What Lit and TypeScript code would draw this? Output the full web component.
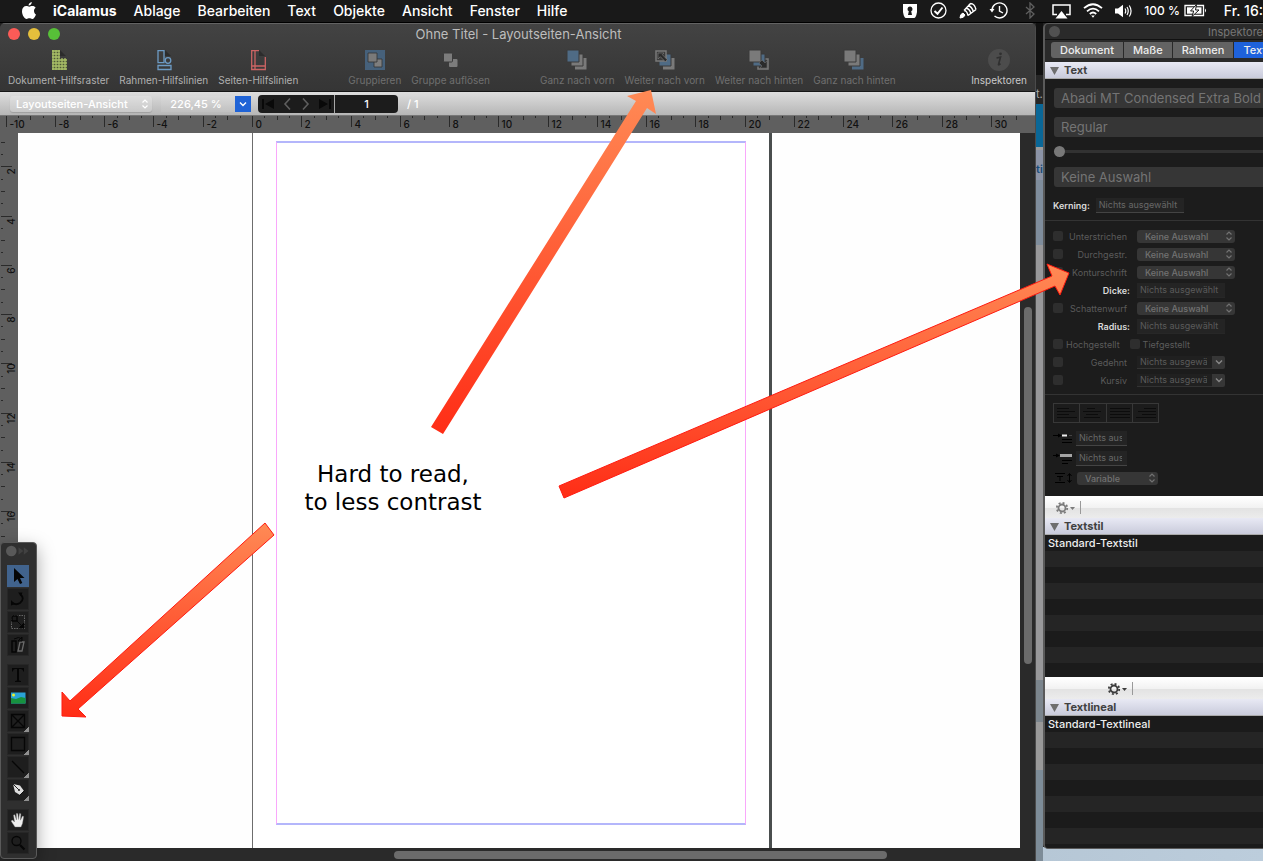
import { LitElement, html, css, svg, nothing } from "lit";
import { customElement, property } from "lit/decorators.js";
import { classMap } from "lit/directives/class-map.js";

const CM = 24.63;

const chevrons = html`<svg class="chev" viewBox="0 0 8 12" width="8" height="12" aria-hidden="true">
  <path d="M1.5 4.5 4 2l2.5 2.5M1.5 7.5 4 10l2.5-2.5" fill="none" stroke="currentColor" stroke-width="1.2" />
</svg>`;

const down = html`<svg class="chev" viewBox="0 0 10 10" width="10" height="10" aria-hidden="true">
  <path d="M2 3.5 5 6.5 8 3.5" fill="none" stroke="currentColor" stroke-width="1.4" />
</svg>`;

const sheet = svg`<path d="M12 1l6 6h-6z" fill="#2c2c2c" />`;

const toolbarIcons: Record<string, unknown> = {
  grid: svg`${sheet}<path d="M4 1h7v9h8v11H4z" fill="#4f5a37"/>
    <path d="M5 1v20M8 1v20M11 1v20M14 9v12M17 9v12M4 2h8M4 5h8M4 8h8M4 11h15M4 14h15M4 17h15M4 20h15" stroke="#a9bf68" stroke-width="1.3" fill="none"/>`,
  frames: svg`${sheet}<g fill="none" stroke="#6d9bc4" stroke-width="1.3"><path d="M5 1.7h6v12H5zM5 16.5h13v4H5z"/><circle cx="15" cy="11.5" r="2.8"/></g>`,
  pages: svg`${sheet}<path d="M12 1.7H4.7v18.8h13.6V8M8 2v18M4.7 17h13.6" fill="none" stroke="#cc6464" stroke-width="1.3"/>`,
  group: svg`<path d="M1 1h20v20H1z" fill="#46617b"/><path d="M10 10h8v8h-8z" fill="#7e7e7e" stroke="#333" stroke-width=".8"/><path d="M4 4h9v9H4z" fill="#7a7a7a" stroke="#333" stroke-width=".8"/>`,
  ungroup: svg`<rect x="9" y="10" width="8.500" height="8" rx="1" fill="#7c7c7c"/><rect x="3.500" y="4" width="9" height="9" rx="1" fill="#7c7c7c" stroke="#3b3b3b"/>`,
  front: svg`<path d="M9 9h11.500v11.500H9z" fill="#7a7a7a"/><path d="M5 5h12v12H5z" fill="#7a7a7a" stroke="#3b3b3b"/><path d="M1 1h12v12H1z" fill="#4f6b85" stroke="#3b3b3b"/>`,
  forward: svg`<path d="M9 9h11.500v11.500H9z" fill="#7a7a7a"/><path d="M5 5h12v12H5z" fill="#4f6b85" stroke="#3b3b3b"/><path d="M2 2h10v10H2z" fill="#3b3b3b" stroke="#7a7a7a" stroke-width="1.500"/><path d="M4 4h6L8.300 5.700l5 5-2 2-5-5L4 10z" fill="#2b2b2b" stroke="#848484" stroke-width=".6"/>`,
  backward: svg`<path d="M10 10h10v10H10z" fill="#3b3b3b" stroke="#7a7a7a" stroke-width="1.500"/><path d="M5 5h12v12H5z" fill="#4f6b85" stroke="#3b3b3b"/><path d="M1 1h12v12H1z" fill="#7a7a7a" stroke="#3b3b3b"/><path d="M19 19h-7l2-2-3-3 3-3 3 3 2-2z" fill="#2b2b2b" stroke="#777" stroke-width=".5"/>`,
  back: svg`<path d="M9 9h11.500v11.500H9z" fill="#4f6b85"/><path d="M5 5h12v12H5z" fill="#7a7a7a" stroke="#3b3b3b"/><path d="M1 1h12v12H1z" fill="#7a7a7a" stroke="#3b3b3b"/>`,
  info: svg`<circle cx="11" cy="11" r="11" fill="#4c4c4c"/><path d="M8.500 9l4-.8-2 7.300q0 .9 2-.9" fill="none" stroke="#303030" stroke-width="1.700"/><circle cx="12.500" cy="4.800" r="1.400" fill="#303030"/>`,
};

const toolGroups = [
  [["grid", "Dokument-Hilfsraster"], ["frames", "Rahmen-Hilfslinien"], ["pages", "Seiten-Hilfslinien"]],
  [["group", "Gruppieren"], ["ungroup", "Gruppe auflösen"]],
  [["front", "Ganz nach vorn"], ["forward", "Weiter nach vorn"], ["backward", "Weiter nach hinten"], ["back", "Ganz nach hinten"]],
  [["info", "Inspektoren"]],
];

@customElement("menu-bar")
export class MenuBar extends LitElement {
  static styles = css`
    :host { display: flex; align-items: center; justify-content: space-between; height: 23px; background: #191919; color: #fff; font-size: 14px; font-weight: 500; line-height: 21px; overflow: hidden; border-bottom: 1px solid #000; box-sizing: border-box; }
    nav, .status { display: flex; align-items: center; white-space: nowrap; height: 21px; align-self: flex-start; }
    nav { padding-left: 22px; gap: 17px; }
    svg { display: block; flex: none; }
    button { all: unset; }
    .app { font-weight: 700; }
    .status { gap: 12px; }
    .power { display: flex; align-items: center; gap: 4px; margin-right: 5px; font-size: 12px; }
    .off { opacity: 0.3; }
  `;
  render() {
    const items = ["Ablage", "Bearbeiten", "Text", "Objekte", "Ansicht", "Fenster", "Hilfe"];
    return html`
      <nav aria-label="Menü">
        <svg width="14" height="17" viewBox="0 0 14 17" fill="#fff"><path d="M9.800 0c.1 1.900-1.400 3.600-3.200 3.600C6.400 1.900 8.100.200 9.800 0zM12 8.700c0-1.500.8-2.400 1.700-3C12.800 4.400 11.400 4 10.300 4 9 4 8.100 4.700 7.300 4.700 6.500 4.700 5.500 4 4.300 4 1.900 4 0 6 0 9.200 0 13 2.600 17 4.600 17c1 0 1.600-.7 2.800-.7s1.700.7 2.800.7c1.600 0 3.100-2.700 3.800-4.600C12.800 11.900 12 10.600 12 8.700z"/></svg>
        <button class="app">iCalamus</button>
        ${items.map((t) => html`<button>${t}</button>`)}
      </nav>
      <div class="status">
        <svg width="16" height="16" viewBox="0 0 16 16"><path d="M1 1h14v8q-1 6-3 6H4q-2 0-3-6z" fill="#fff"/><path d="M8 3.500a2.500 2.500 0 0 1 1.200 4.700L10 12H6l.8-3.800A2.500 2.500 0 0 1 8 3.500z" fill="#191919"/></svg>
        <svg width="17" height="17" viewBox="0 0 17 17" fill="none" stroke="#fff"><circle cx="8.500" cy="8.500" r="7.500" stroke-width="1.300"/><path d="M4.500 9l3 2.800 5-6.300" stroke-width="2"/></svg>
        <svg width="18" height="17" viewBox="0 0 18 17" fill="none" stroke="#fff"><path d="M1 16q0-4 3-5l2 2q-1 3-5 3" fill="#fff"/><path d="M5 8.500q3 0 4 5M7 6q4 1 5 6M9 3.500q4 1 5.500 6.500M11.500 1.500q4 0 5.500 6M5 8.500l6.500-7M9 13.500l8-6" stroke-width="1.400"/></svg>
        <svg width="19" height="17" viewBox="0 0 19 17" fill="none" stroke="#fff"><path d="M3 8.500A7.500 7.500 0 1 1 5.500 14M10.500 4v5l3.500 2" stroke-width="1.400"/><path d="M.5 7h5L3 10.500z" fill="#fff" stroke="none"/></svg>
        <svg class="off" width="20" height="17" viewBox="0 0 20 17" fill="none" stroke="#fff" stroke-width="1.300"><path d="M6 5l8 7-4 4V1l4 4-8 7"/></svg>
        <svg width="19" height="16" viewBox="0 0 19 16"><path d="M5 11.500H1V2h17v9.500h-4" fill="none" stroke="#fff" stroke-width="1.500"/><path d="M9.500 8l6 7.500h-12z" fill="#fff"/></svg>
        <svg width="20" height="15" viewBox="0 0 20 15" fill="none" stroke="#fff" stroke-width="1.800"><path d="M1 5.200q9-8 18 0M4 8.300q6-5.300 12 0M6.800 11q3.200-3 6.400 0"/><path d="M8.200 12.500h3.600L10 14.800z" fill="#fff" stroke="none"/></svg>
        <svg width="17" height="14" viewBox="0 0 17 14"><path d="M0 4.500h3L8 .8v12.400L3 9.500H0z" fill="#fff"/><path d="M10 4.500q1.500 2.500 0 5M12 3q2.500 4 0 8M14.300 1.500q3.500 5.500 0 11" fill="none" stroke="#fff" stroke-width="1.200"/></svg>
        <span class="power">100 %
          <svg width="23" height="13" viewBox="0 0 23 13"><path d="M1 1.500h18.500v10H1z" fill="none" stroke="#fff" stroke-width="1.300"/><path d="M3 3.300h14.500v6.400H3z" fill="#fff"/><path d="M21 4.500q2 2 0 4z" fill="#fff"/><path d="M12.500.5l-6 6.500h3.200L8 12.500 15 6h-3.500z" fill="#fff" stroke="#191919"/></svg>
        </span>
        <span>Fr. 16:</span>
      </div>`;
  }
}

@customElement("ruler-strip")
export class RulerStrip extends LitElement {
  @property({ type: Boolean, reflect: true }) vertical = false;
  @property({ type: Number }) origin = 0;
  @property({ type: Number }) from = 0;
  @property({ type: Number }) to = 0;
  static styles = css`
    :host { display: block; background: #5f5f5f; overflow: hidden; height: 18px; box-sizing: border-box; border-top: 1px solid #777; }
    :host([vertical]) { height: auto; width: 18px; min-height: 0; border-top: 0; }
    svg { display: block; width: 100%; height: 100%; overflow: hidden; }
    text { font: 500 10px Inter, sans-serif; fill: #111; }
    path { stroke: #2a2a2a; fill: none; }
  `;
  render() {
    const marks = [];
    for (let h = this.from * 2; h <= this.to * 2; h++) {
      const p = Math.round(this.origin + (h / 2) * CM) + 0.5;
      const len = h % 4 === 0 ? 11 : h % 2 === 0 ? 4 : 2;
      const label = h % 4 === 0 ? String(h / 2) : "";
      marks.push(
        this.vertical
          ? svg`<path d="M1 ${p}h${len}"/>${label ? svg`<text transform="translate(15 ${p + 5}) rotate(-90)" text-anchor="middle">${label}</text>` : nothing}`
          : svg`<path d="M${p} 0v${len}"/>${label ? svg`<text x=${p + 3} y="12">${label}</text>` : nothing}`
      );
    }
    return html`<svg aria-hidden="true">${marks}</svg>`;
  }
}

const ink = "#060606";
const tools: [string, unknown, boolean?][][] = [
  [
    ["Auswahl", svg`<path d="M7 3v14l3.500-3 2.500 5 2.300-1-2.300-5h4.500z" fill="#050505"/>`],
    ["Drehen", svg`<path d="M13 6q5.500 4.500 0 9-4 2.500-7.500 0" fill="none" stroke=${ink} stroke-width="1.800"/><path d="M11 4.500h4.500L14 8zM4 12v5.500l4-1.500z" fill=${ink}/>`],
    ["Skalieren", svg`<path d="M4.500 4.500h13v13h-13z" fill="none" stroke="#666" stroke-dasharray="1.500 1"/><path d="M5 5h5v5H5z" fill="#1d1d1d" stroke=${ink} stroke-width="1.500"/><path d="M10 10l5 5M17 17v-5l-5 5z" fill=${ink} stroke=${ink}/>`],
    ["Neigen", svg`<path d="M5 7h4v11H5z" fill="none" stroke=${ink} stroke-width="1.500"/><path d="M13 8h4l-2 9h-4z" fill="none" stroke="#6a6a6a" stroke-width="1.300"/><path d="M7 5q5-3 8 0M15 3v4h-4z" fill="none" stroke=${ink}/>`],
  ],
  [
    ["Text", svg`<path d="M5 4h12v3.500h-.8Q16 5.200 14 5h-2v11q0 1 2 1v1H8v-1q2 0 2-1V5H8Q6 5.200 5.800 7.500H5z" fill=${ink}/>`],
    ["Bild", svg`<path d="M4 5.500h14.500v11H4z" fill="#2aa3d6"/><path d="M4 11l5 1 5-2 4.500 1v5.500H4z" fill="#17923f"/><circle cx="6.500" cy="8" r="1.500" fill="#e9f02f"/>`],
    ["Rahmen", svg`<path d="M4.500 4.500h13v13h-13zl13 13m0-13l-13 13" fill="none" stroke=${ink} stroke-width="1.300"/>`, true],
    ["Rechteck", svg`<path d="M4.500 4.500h13v13h-13z" fill="none" stroke=${ink} stroke-width="1.300"/>`, true],
    ["Linie", svg`<path d="M5 5l12 12" fill="none" stroke=${ink} stroke-width="1.300"/>`, true],
    ["Feder", svg`<path d="M6 5l7 1.500 4 5.500-4 4-5-3z" fill="#ddd"/><path d="M12 17l6-6" stroke="#111"/><path d="M6 5l6 6" stroke="#222"/><circle cx="12" cy="11" r="1" fill="#222"/>`, true],
  ],
  [
    ["Hand", svg`<path d="M8 18l-4-6 1.500-1 2 2L6.500 6l1.300-.3L9.500 11 9.300 4.500h1.500l.7 6 1-6 1.400.2-.5 6.500L15.500 7l1.200.5-1.200 7L14 18z" fill="#eee" stroke="#777" stroke-width=".4"/>`],
    ["Lupe", svg`<circle cx="9.500" cy="9" r="4.500" fill="none" stroke=${ink} stroke-width="1.300"/><path d="M13 13l4.500 4.500" stroke=${ink} stroke-width="2.200"/>`],
  ],
];

@customElement("tool-palette")
export class ToolPalette extends LitElement {
  static styles = css`
    :host { display: flex; flex-direction: column; box-sizing: border-box; width: 37px; padding: 2px 6px 4px; gap: 8px; background: #2f2f2f; border: 1px solid #5a5a5a; border-radius: 4px; box-shadow: 0 6px 18px rgba(0, 0, 0, 0.35); }
    .bar { display: flex; align-items: center; height: 12px; margin: 0 -1px; }
    .group { display: flex; flex-direction: column; gap: 1px; }
    button { all: unset; display: block; width: 22px; height: 22px; background: #1e1e1e; box-shadow: inset 0 0 0 1px #272727; }
    button.on { background: #41638d; box-shadow: none; }
    svg { display: block; }
  `;
  render() {
    return html`<div class="bar"><svg width="26" height="12" viewBox="0 0 26 12"><circle cx="5.500" cy="6" r="5.500" fill="#595959"/><path d="M13 2l5 4-5 4zM18.500 2l5 4-5 4z" fill="#414141"/></svg></div>
      ${tools.map((g) => html`<div class="group">${g.map(([name, icon, more]) => html`
        <button class=${classMap({ on: name === "Auswahl" })} aria-label=${name}>
          <svg width="22" height="22" viewBox="0 0 22 22">${icon}${more ? svg`<path d="M22 17v5h-5z" fill="#8f8f8f" stroke="#8f8f8f"/>` : nothing}</svg>
        </button>`)}</div>`)}`;
  }
}

@customElement("layout-window")
export class LayoutWindow extends LitElement {
  static styles = css`
    :host { display: flex; flex-direction: column; min-width: 0; box-sizing: border-box; border-right: 1px solid #4b4b4b; border-radius: 5px 5px 0 0; overflow: hidden; background: #2a2a2a; }
    header { background: linear-gradient(#434343, #353535); border-top: 1px solid #636363; border-bottom: 1px solid #161616; height: 67px; box-sizing: content-box; }
    .title { display: grid; grid-template-columns: 1fr auto 1fr; align-items: center; height: 20px; padding-left: 2px; color: #bdbdbd; font-size: 13px; }
    .lights { display: flex; gap: 8px; padding-left: 6px; }
    .light { width: 12px; height: 12px; border-radius: 50%; background: #fc5b57; }
    .light.min { background: #e5bf3c; }
    .light.max { background: #57c038; }
    .tools { display: flex; gap: 50px; padding: 5px 8px 0 8px; color: #6f6f6f; }
    .set { display: flex; gap: 10px; }
    .set:last-child { margin-left: auto; color: #c9c9c9; }
    .set:first-child { color: #b0b0b0; }
    .tool { all: unset; display: flex; flex-direction: column; align-items: center; gap: 1px; font-size: 10px; line-height: 16px; white-space: nowrap; }
    svg { display: block; }
    .controls { display: flex; align-items: center; flex: none; height: 23px; padding-left: 10px; background: linear-gradient(#dedede, #b6b6b6); color: #fff; font-size: 11px; font-weight: 500; }
    .pick { display: grid; align-items: center; width: 142px; height: 16px; border-radius: 3px; background: rgba(255, 255, 255, 0.2); box-shadow: 0 1px 1px rgba(0, 0, 0, 0.15); }
    .pick > * { grid-area: 1 / 1; }
    .pick .chev { justify-self: end; margin-right: 3px; }
    select, input { all: unset; box-sizing: border-box; min-width: 0; }
    select { padding-left: 6px; height: 16px; line-height: 16px; }
    .zoom { display: flex; margin-left: 9px; height: 16px; }
    .zoom input { width: 74px; padding-right: 4px; text-align: center; background: rgba(255, 255, 255, 0.08); }
    .zoom button { all: unset; display: grid; place-items: center; width: 16px; background: #1f63d6; }
    .pager { display: flex; align-items: center; margin: 0 9px 0 7px; width: 140px; height: 18px; border-radius: 4px; background: #1c1c1c; }
    .pager button { all: unset; flex: 1; display: grid; place-items: center; color: #5e5e5e; }
    .pager button.end { color: #090909; }
    .pager input { width: 64px; height: 18px; border-left: 1px solid #a8a8a8; text-align: center; }
    .work { flex: 1; min-height: 0; display: grid; grid-template-columns: 18px minmax(0, 1fr) 15px; grid-template-rows: minmax(0, 1fr) 13px; }
    .canvas { position: relative; background: #fefefe; overflow: hidden; }
    .page { position: absolute; left: 234px; top: 0; bottom: 0; width: 520px; box-sizing: border-box; border-left: 1px solid #6d6d6d; border-right: 3px solid #4a4e4e; background: #fff; }
    .margins { position: absolute; left: 23px; top: 8px; width: 470px; height: 684px; box-sizing: border-box; border: 1px solid #f9a8fb; border-top: 2px solid #b4b6fb; border-bottom: 2px solid #b4b6fb; }
    .note { position: absolute; left: 280px; top: 327px; width: 190px; margin: 0; text-align: center; color: #000; font: 400 23px/28px "DejaVu Sans", sans-serif; white-space: nowrap; }
    .vrail { display: flex; justify-content: flex-end; padding: 174px 3px 0 0; }
    .vrail i { width: 8px; height: 357px; border-radius: 4px; background: #6b6b6b; }
    .hrail { grid-column: 1 / -1; display: flex; align-items: center; padding-left: 394px; }
    .hrail i { height: 8px; width: 493px; border-radius: 4px; background: #6b6b6b; }
    ruler-strip { flex: none; }
  `;
  render() {
    return html`
      <header>
        <div class="title"><span class="lights"><span class="light"></span><span class="light min"></span><span class="light max"></span></span><span>Ohne Titel - Layoutseiten-Ansicht</span></div>
        <div class="tools">${toolGroups.map((g) => html`<div class="set">${g.map(([icon, label]) => html`<button class="tool"><svg width="22" height="22" viewBox="0 0 22 22">${toolbarIcons[icon]}</svg>${label}</button>`)}</div>`)}</div>
      </header>
      <div class="controls">
        <div class="pick"><select aria-label="Ansicht"><option>Layoutseiten-Ansicht</option></select>${chevrons}</div>
        <div class="zoom"><input aria-label="Zoom" value="226,45 %" /><button aria-label="Zoomstufen">${down}</button></div>
        <div class="pager">
          <button class="end" aria-label="Erste Seite"><svg width="14" height="12" viewBox="0 0 14 12" fill="currentColor"><path d="M1 1h2v10H1zM13 1v10L4 6z"/></svg></button>
          <button aria-label="Zurück"><svg width="10" height="14" viewBox="0 0 10 14" fill="none" stroke="currentColor" stroke-width="1.600"><path d="M8 1.500 3 7l5 5.500"/></svg></button>
          <button aria-label="Weiter"><svg width="10" height="14" viewBox="0 0 10 14" fill="none" stroke="currentColor" stroke-width="1.600"><path d="M2 1.500 7 7l-5 5.500"/></svg></button>
          <button class="end" aria-label="Letzte Seite"><svg width="14" height="12" viewBox="0 0 14 12" fill="currentColor"><path d="M11 1h2v10h-2zM1 1v10l9-5z"/></svg></button>
          <input aria-label="Seite" value="1" />
        </div>
        <span>/ 1</span>
      </div>
      <ruler-strip .origin=${252} .from=${-10} .to=${31}></ruler-strip>
      <div class="work">
        <ruler-strip vertical .origin=${-16} .from=${1} .to=${29}></ruler-strip>
        <div class="canvas">
          <div class="page"><div class="margins"></div></div>
          <p class="note">Hard to read,<br />to less contrast</p>
        </div>
        <div class="vrail"><i></i></div>
        <div class="hrail"><i></i></div>
      </div>`;
  }
}

const gear = html`<svg width="20" height="14" viewBox="0 0 20 14" aria-hidden="true"><circle cx="6" cy="7" r="3.500" fill="none" stroke="currentColor" stroke-width="1.800"/><circle cx="6" cy="7" r="5.200" fill="none" stroke="currentColor" stroke-width="1.800" stroke-dasharray="2 2.080"/><path d="M14 6h5l-2.500 3z" fill="currentColor"/></svg>`;

@customElement("inspector-panel")
export class InspectorPanel extends LitElement {
  static styles = css`
    :host { display: flex; flex-direction: column; box-sizing: border-box; overflow: hidden; white-space: nowrap; border: 1px solid #5a5a5a; border-left-width: 2px; border-right: 0; border-radius: 5px 0 0 5px; background: #2a2a2a; color: #5b5b5b; font-size: 9px; }
    svg { display: block; }
    .title { display: flex; align-items: center; justify-content: space-between; height: 15px; padding-left: 4px; color: #777; font-size: 11px; border-bottom: 1px solid #111; }
    .dot { width: 11px; height: 11px; border-radius: 50%; background: #515151; }
    .tabs { display: flex; gap: 1px; margin: 2px 0 4px 6px; height: 16px; flex: none; font-size: 11px; font-weight: 500; line-height: 16px; }
    .tabs button { all: unset; padding: 0 9px; background: #636363; color: #eee; }
    .tabs button:first-child { border-radius: 3px 0 0 3px; }
    .tabs button.on { flex: 1 0 auto; background: #1e62dc; }
    h2 { display: flex; flex: none; align-items: center; gap: 5px; margin: 0; height: 17px; padding: 1px 0 0 5px; box-sizing: border-box; background: linear-gradient(#e8e9f4, #c9cbdb); border-bottom: 1px solid #aaa; color: #414141; font-size: 11px; font-weight: 700; line-height: 15px; }
    select, input { all: unset; box-sizing: border-box; min-width: 0; }
    section { background: #1c1c1c; flex: none; box-sizing: border-box; padding-left: 8px; }
    .fonts { display: flex; flex-direction: column; height: 142px; padding-top: 9px; border-bottom: 1px solid #333; }
    .big { display: block; height: 20px; margin: 0 0 9px 1px; padding-left: 7px; border-radius: 3px 0 0 3px; background: #363636; color: #747474; font-size: 13px; line-height: 20px; }
    .slide { appearance: none; display: block; margin: 0 0 10px 1px; height: 11px; background: linear-gradient(transparent 4px, #323232 4px 7px, transparent 7px); }
    .slide::-webkit-slider-thumb { appearance: none; width: 11px; height: 11px; border-radius: 50%; background: #787878; }
    .kern { display: flex; align-items: center; gap: 6px; height: 16px; margin-top: 1px; }
    b { color: #d9d9d9; font-weight: 600; }
    .field { width: 88px; height: 15px; padding: 0 3px; background: #242424; color: #686868; border-bottom: 1px solid #444; line-height: 14px; }
    .flat { border-bottom-color: #272727; color: #5b5b5b; }
    .effects { padding-top: 6px; height: 174px; border-bottom: 1px solid #333; }
    .row { display: grid; grid-template-columns: 10px 64px 98px; align-items: center; height: 18px; }
    .row label, .row b { text-align: right; }
    .row > :last-child { margin-left: 10px; }
    .row b { margin-right: -3px; }
    input[type="checkbox"] { width: 10px; height: 10px; border-radius: 2px; background: #2e2e2e; }
    .pick { display: grid; align-items: center; width: 98px; height: 13px; border-radius: 3px; background: #363636; color: #727272; }
    .pick > * { grid-area: 1 / 1; }
    .pick select { padding-left: 8px; height: 13px; line-height: 13px; font-weight: 500; }
    .pick .chev { justify-self: end; margin-right: 2px; }
    .wide { width: 81px; }
    .pair { display: flex; align-items: center; height: 18px; }
    .pair label { margin: 0 10px 0 3px; }
    .combo { display: flex; width: 88px; height: 13px; }
    .combo input { flex: 1; height: 13px; padding: 0 5px 0 3px; line-height: 13px; background: #202020; border-bottom: 1px solid #333; }
    .combo button { all: unset; display: grid; place-items: center; width: 13px; background: #363636; border-radius: 0 2px 2px 0; color: #888; }
    .para { height: 101px; padding-top: 8px; display: flex; flex-direction: column; }
    .align { display: flex; width: 106px; height: 20px; box-sizing: border-box; border: 1px solid #383838; margin-bottom: 5px; }
    .align button { all: unset; flex: 1; display: grid; place-items: center; border-right: 1px solid #383838; }
    .align button:last-child { border-right: 0; }
    .indent { display: flex; align-items: center; gap: 4px; height: 20px; }
    .indent .field { width: 51px; padding-right: 5px; }
    .bar { display: flex; align-items: center; flex: none; height: 22px; box-sizing: border-box; padding-left: 11px; gap: 4px; background: linear-gradient(#fff, #f2f2f2 50%, #e2e2e2 50%, #ececec); color: #7b7b7b; border-top: 1px solid #fff; }
    .bar.far { padding-left: 63px; color: #3c3c3c; }
    .bar::after { content: ""; width: 1px; height: 13px; background: #999; }
    .bar button { all: unset; }
    ul { margin: 0; padding: 0; list-style: none; flex: none; height: 142px; color: #eee; font-size: 11px; font-weight: 500; line-height: 16px; background: repeating-linear-gradient(#1b1b1b 0 16px, #252525 16px 32px); }
    ul.last { height: auto; flex: 1; }
    li { padding-left: 3px; }
  `;
  private check(id: string, label: string, tail: unknown) {
    return html`<div class="row"><input type="checkbox" id=${id} disabled /><label for=${id}>${label}</label><div>${tail}</div></div>`;
  }
  private pick(label: string, value = "Keine Auswahl", cls = "pick") {
    return html`<div class=${cls}><select aria-label=${label} disabled><option>${value}</option></select>${chevrons}</div>`;
  }
  private combo(label: string) {
    return html`<div class="combo"><input aria-label=${label} value="Nichts ausgewählt" /><button aria-label="Werte">${down}</button></div>`;
  }
  private head(label: string) {
    return html`<h2><svg width="9" height="8" viewBox="0 0 9 8"><path d="M0 0h9L4.500 8z" fill="#6e6e6e"/></svg>${label}</h2>`;
  }
  render() {
    const lines = [["3h12", "3h18", "3h12", "3h20"], ["7h8", "3h18", "6h12", "4h16"], ["3h20", "3h20", "3h20", "3h20"], ["11h12", "5h18", "9h14", "3h20"]];
    return html`
      <div class="title"><span class="dot"></span><span>Inspektore</span></div>
      <div class="tabs"><button>Dokument</button><button>Maße</button><button>Rahmen</button><button class="on">Text</button></div>
      ${this.head("Text")}
      <section class="fonts">
        <select class="big" aria-label="Schrift"><option>Abadi MT Condensed Extra Bold</option></select>
        <select class="big" aria-label="Schnitt"><option>Regular</option></select>
        <input class="slide" type="range" aria-label="Größe" min="0" max="100" value="0" />
        <select class="big" aria-label="Stil"><option>Keine Auswahl</option></select>
        <div class="kern"><label for="kern"><b>Kerning:</b></label><input id="kern" class="field" value="Nichts ausgewählt" /></div>
      </section>
      <section class="effects">
        ${this.check("under", "Unterstrichen", this.pick("Unterstrichen Stil"))}
        ${this.check("strike", "Durchgestr.", this.pick("Durchgestrichen Stil"))}
        ${this.check("outline", "Konturschrift", this.pick("Kontur Stil"))}
        <div class="row"><span></span><b>Dicke:</b><div><input class="field flat" aria-label="Dicke" value="Nichts ausgewählt" /></div></div>
        ${this.check("shadow", "Schattenwurf", this.pick("Schatten Stil"))}
        <div class="row"><span></span><b>Radius:</b><div><input class="field flat" aria-label="Radius" value="Nichts ausgewählt" /></div></div>
        <div class="pair"><input type="checkbox" id="sup" disabled /><label for="sup">Hochgestellt</label><input type="checkbox" id="sub" disabled /><label for="sub">Tiefgestellt</label></div>
        ${this.check("wide", "Gedehnt", this.combo("Dehnung"))}
        ${this.check("ital", "Kursiv", this.combo("Neigung"))}
      </section>
      <section class="para">
        <div class="align">${lines.map((l, i) => html`<button aria-label=${["Links", "Zentriert", "Blocksatz", "Rechts"][i]}><svg width="25" height="14" viewBox="0 0 25 14"><path d=${l.map((s, j) => `M${s.replace("h", ` ${2.5 + j * 3}h`)}`).join("")} stroke="#0c0c0c" fill="none"/></svg></button>`)}</div>
        <div class="indent"><svg width="19" height="12" viewBox="0 0 19 12"><path d="M0 3.500h6M9 7.500h10M9 10.500h10" stroke="#000"/><path d="M5 1.500l4 2-4 2z" fill="#000"/><path d="M9 3.500h5" stroke="#eee" stroke-width="2"/><path d="M16 3.500h3" stroke="#444"/></svg><input class="field" aria-label="Erstzeileneinzug" value="Nichts ausgewählt" /></div>
        <div class="indent"><svg width="19" height="12" viewBox="0 0 19 12"><path d="M0 3.500h5M9 8.500h10M9 11.500h6" stroke="#000"/><path d="M3 1.500l4 2-4 2z" fill="#000"/><path d="M7 3.500h12" stroke="#a5a5a5" stroke-width="3"/></svg><input class="field" aria-label="Einzug" value="Nichts ausgewählt" /></div>
        <div class="indent"><svg width="20" height="12" viewBox="0 0 20 12"><path d="M2 1.500h10M2 10.500h10M4 4.500h6M7 4v5M16.500 2v8M14.500 4l2-2.500 2 2.500M14.500 8l2 2.500 2-2.500" stroke="#000" fill="none"/></svg>${this.pick("Zeilenabstand", "Variable", "pick wide")}</div>
      </section>
      <div class="bar"><button aria-label="Textstil Aktionen">${gear}</button></div>
      ${this.head("Textstil")}
      <ul><li>Standard-Textstil</li></ul>
      <div class="bar far"><button aria-label="Textlineal Aktionen">${gear}</button></div>
      ${this.head("Textlineal")}
      <ul class="last"><li>Standard-Textlineal</li></ul>`;
  }
}

@customElement("app-root")
export class AppRoot extends LitElement {
  static styles = css`
    :host { display: grid; grid-template-rows: 23px minmax(0, 1fr); height: 100vh; position: relative; overflow: hidden; font-family: Inter, "Liberation Sans", sans-serif; background: #111; }
    .desktop { display: grid; grid-template-columns: minmax(0, 1fr) 7px 220px; background: linear-gradient(90deg, #9aabb9, #bccddc) bottom / 100% 14px no-repeat, #222; }
    inspector-panel { margin-bottom: 12px; }
    .behind { overflow: hidden; font-size: 11px; line-height: 14px; color: #aaa; padding-top: 64px; background: linear-gradient(#111 52px, #262626 52px 81px, #0a6797 81px 124px, #9c9c9c 124px 127px, #8b93a6 127px 157px, #7f8d9c 157px 222px, #98989a 222px 657px, #7b858d 657px 699px, #999 699px 747px, #7d8c98 747px); }
    .behind span { display: block; }
    .behind .link { margin-top: 61px; color: #174a78; font-weight: 600; }
    tool-palette { position: absolute; left: 0; top: 542px; }
    .arrows { position: absolute; left: 0; top: 0; width: 1263px; height: 861px; pointer-events: none; }
  `;
  render() {
    return html`
      <menu-bar></menu-bar>
      <div class="desktop">
        <layout-window></layout-window>
        <div class="behind"><span>t.</span><span class="link">ti</span></div>
        <inspector-panel></inspector-panel>
      </div>
      <tool-palette></tool-palette>
      <svg class="arrows" viewBox="0 0 1263 861" aria-hidden="true">
        <defs>
          <linearGradient id="a" x1="0" y1="434" x2="0" y2="90" gradientUnits="userSpaceOnUse"><stop offset="0" stop-color="#ff2d16"/><stop offset="1" stop-color="#ff8a55"/></linearGradient>
          <linearGradient id="b" x1="0" y1="498" x2="0" y2="264" gradientUnits="userSpaceOnUse"><stop offset="0" stop-color="#ff2d16"/><stop offset="1" stop-color="#ff8a55"/></linearGradient>
          <linearGradient id="c" x1="0" y1="717" x2="0" y2="523" gradientUnits="userSpaceOnUse"><stop offset="0" stop-color="#ff2d16"/><stop offset="1" stop-color="#ff8a55"/></linearGradient>
        </defs>
        <path d="M431 427 636 101 627 96 651 90 656 114 647 108 443 434z" fill="url(#a)"/>
        <path d="M559 486 1052 276 1047 264 1069 273 1060 295 1055 286 564 498z" fill="url(#b)" stroke="#ff1a10"/>
        <path d="M265 523 70 701 62 692 62 716 86 717 78 709 274 535z" fill="url(#c)" stroke="#ff1a10"/>
      </svg>`;
  }
}
